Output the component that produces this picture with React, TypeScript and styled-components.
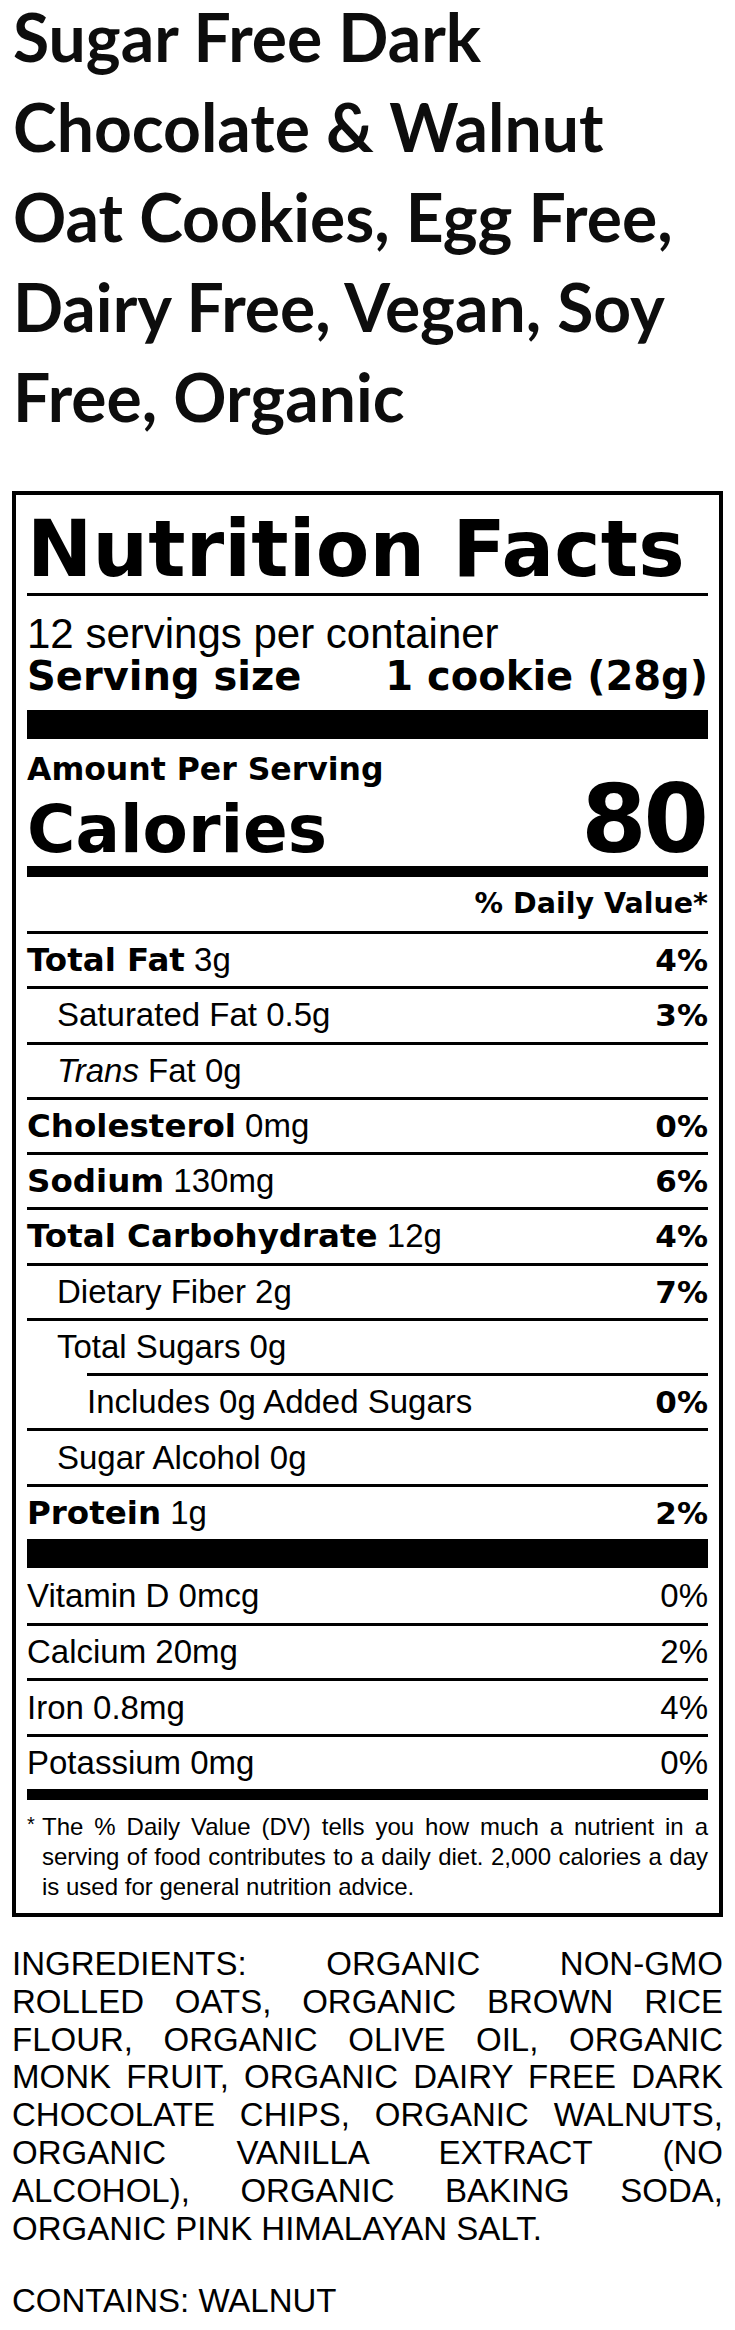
import React from 'react';
import styled, { createGlobalStyle } from 'styled-components';

const GlobalStyle = createGlobalStyle`
  body {
    margin: 0;
    background: #ffffff;
    color: #000000;
  }
`;

const Page = styled.div`
  width: 735px;
  padding: 0 12px;
  box-sizing: border-box;
`;

const Title = styled.h1`
  margin: -8px 0 49px;
  padding-left: 1px;
  font-family: 'Lato', sans-serif;
  font-weight: 700;
  font-size: 66px;
  line-height: 90px;
  color: #0d0d0d;
`;

const TitleLine = styled.span`
  display: block;
  white-space: nowrap;
`;

const Label = styled.section`
  border: 4px solid #000;
  padding: 0 11px;
`;

const LabelTitle = styled.h2`
  margin: 0;
  padding: 15px 0 5px;
  border-bottom: 3px solid #000;
  font-family: 'DejaVu Sans', sans-serif;
  font-weight: 700;
  font-size: 78px;
  line-height: 78px;
  letter-spacing: 0.2px;
  white-space: nowrap;
`;

const Servings = styled.div`
  padding: 17px 0 13px;
  border-bottom: 29px solid #000;
`;

const ServingsCount = styled.div`
  font-family: 'Liberation Sans', Arial, sans-serif;
  font-size: 42px;
  line-height: 42px;
`;

const ServingSize = styled.div`
  display: flex;
  justify-content: space-between;
  font-family: 'DejaVu Sans', sans-serif;
  font-weight: 700;
  font-size: 40px;
  line-height: 42px;
`;

const Amount = styled.div`
  padding: 14px 0 3px;
  border-bottom: 11px solid #000;
`;

const AmountLabel = styled.div`
  font-family: 'DejaVu Sans', sans-serif;
  font-weight: 700;
  font-size: 31.5px;
  line-height: 32px;
`;

const CaloriesRow = styled.div`
  display: flex;
  justify-content: space-between;
  align-items: baseline;
  font-family: 'DejaVu Sans', sans-serif;
  font-weight: 700;
`;

const CaloriesLabel = styled.span`
  font-size: 66px;
  line-height: 66px;
`;

const CaloriesValue = styled.span`
  font-size: 94px;
  line-height: 70px;
  letter-spacing: -3px;
  margin-right: 2px;
`;

const DailyHeader = styled.div`
  padding: 12px 0;
  text-align: right;
  font-family: 'DejaVu Sans', sans-serif;
  font-weight: 700;
  font-size: 28.5px;
  line-height: 30px;
`;

const Row = styled.div<{ $indent?: number; $rule?: boolean }>`
  display: flex;
  align-items: center;
  justify-content: space-between;
  box-sizing: border-box;
  height: 55.27px;
  border-top: ${(p) => (p.$rule === false ? '0' : '3px solid #000')};
  margin-left: ${(p) => (p.$indent === 2 ? '60px' : '0')};
  padding-left: ${(p) => (p.$indent === 1 ? '30px' : '0')};
  white-space: nowrap;
`;

const Name = styled.span<{ $bold?: boolean }>`
  font-family: ${(p) => (p.$bold ? "'DejaVu Sans', sans-serif" : "'Liberation Sans', Arial, sans-serif")};
  font-weight: ${(p) => (p.$bold ? 700 : 400)};
  font-size: ${(p) => (p.$bold ? '32.5px' : '33px')};
`;

const Qty = styled.span`
  font-family: 'Liberation Sans', Arial, sans-serif;
  font-size: 33px;
`;

const Percent = styled.span<{ $bold?: boolean }>`
  font-family: ${(p) => (p.$bold ? "'DejaVu Sans', sans-serif" : "'Liberation Sans', Arial, sans-serif")};
  font-weight: ${(p) => (p.$bold ? 700 : 400)};
  font-size: ${(p) => (p.$bold ? '31px' : '33px')};
`;

const Vitamins = styled.div`
  border-top: 29px solid #000;
  border-bottom: 11px solid #000;
`;

const Footnote = styled.div`
  display: grid;
  grid-template-columns: 15px 1fr;
  padding: 12px 0 11px;
  font-family: 'Liberation Sans', Arial, sans-serif;
  font-size: 24px;
  line-height: 30px;
`;

const Star = styled.span`
  font-size: 20px;
  line-height: 24px;
`;

const JustLine = styled.span<{ $last?: boolean }>`
  display: block;
  text-align: justify;
  text-align-last: ${(p) => (p.$last ? 'left' : 'justify')};
  white-space: nowrap;
`;

const Ingredients = styled.div`
  margin-top: 28px;
  font-family: 'Liberation Sans', Arial, sans-serif;
  font-size: 33px;
  line-height: 37.8px;
`;

const Contains = styled.div`
  margin-top: 35px;
  font-family: 'Liberation Sans', Arial, sans-serif;
  font-size: 33px;
  line-height: 37.8px;
`;

type Nutrient = {
  name: React.ReactNode;
  amount: string;
  dv?: string;
  bold?: boolean;
  indent?: number;
};

const nutrients: Nutrient[] = [
  { name: 'Total Fat', amount: '3g', dv: '4%', bold: true },
  { name: 'Saturated Fat', amount: '0.5g', dv: '3%', indent: 1 },
  { name: <><i>Trans</i> Fat</>, amount: '0g', indent: 1 },
  { name: 'Cholesterol', amount: '0mg', dv: '0%', bold: true },
  { name: 'Sodium', amount: '130mg', dv: '6%', bold: true },
  { name: 'Total Carbohydrate', amount: '12g', dv: '4%', bold: true },
  { name: 'Dietary Fiber', amount: '2g', dv: '7%', indent: 1 },
  { name: 'Total Sugars', amount: '0g', indent: 1 },
  { name: 'Includes 0g Added Sugars', amount: '', dv: '0%', indent: 2 },
  { name: 'Sugar Alcohol', amount: '0g', indent: 1 },
  { name: 'Protein', amount: '1g', dv: '2%', bold: true },
];

const vitamins = [
  { name: 'Vitamin D 0mcg', dv: '0%' },
  { name: 'Calcium 20mg', dv: '2%' },
  { name: 'Iron 0.8mg', dv: '4%' },
  { name: 'Potassium 0mg', dv: '0%' },
];

const titleLines = [
  'Sugar Free Dark',
  'Chocolate & Walnut',
  'Oat Cookies, Egg Free,',
  'Dairy Free, Vegan, Soy',
  'Free, Organic',
];

const footnoteLines = [
  'The % Daily Value (DV) tells you how much a nutrient in a',
  'serving of food contributes to a daily diet. 2,000 calories a day',
  'is used for general nutrition advice.',
];

const ingredientLines = [
  'INGREDIENTS: ORGANIC NON-GMO',
  'ROLLED OATS, ORGANIC BROWN RICE',
  'FLOUR, ORGANIC OLIVE OIL, ORGANIC',
  'MONK FRUIT, ORGANIC DAIRY FREE DARK',
  'CHOCOLATE CHIPS, ORGANIC WALNUTS,',
  'ORGANIC VANILLA EXTRACT (NO',
  'ALCOHOL), ORGANIC BAKING SODA,',
  'ORGANIC PINK HIMALAYAN SALT.',
];

const App = () => {
  return (
    <Page>
      <GlobalStyle />
      <Title>
        {titleLines.map((line) => (
          <TitleLine key={line}>{line}</TitleLine>
        ))}
      </Title>

      <Label>
        <LabelTitle>Nutrition Facts</LabelTitle>

        <Servings>
          <ServingsCount>12 servings per container</ServingsCount>
          <ServingSize>
            <span>Serving size</span>
            <span>1 cookie (28g)</span>
          </ServingSize>
        </Servings>

        <Amount>
          <AmountLabel>Amount Per Serving</AmountLabel>
          <CaloriesRow>
            <CaloriesLabel>Calories</CaloriesLabel>
            <CaloriesValue>80</CaloriesValue>
          </CaloriesRow>
        </Amount>

        <DailyHeader>% Daily Value*</DailyHeader>

        {nutrients.map((n, i) => (
          <Row key={i} $indent={n.indent}>
            <span>
              <Name $bold={n.bold}>{n.name}</Name>
              {n.amount && <Qty> {n.amount}</Qty>}
            </span>
            {n.dv && <Percent $bold>{n.dv}</Percent>}
          </Row>
        ))}

        <Vitamins>
          {vitamins.map((v, i) => (
            <Row key={v.name} $rule={i > 0}>
              <Name>{v.name}</Name>
              <Percent>{v.dv}</Percent>
            </Row>
          ))}
        </Vitamins>

        <Footnote>
          <Star>*</Star>
          <div>
            {footnoteLines.map((line, i) => (
              <JustLine key={line} $last={i === footnoteLines.length - 1}>
                {line}
              </JustLine>
            ))}
          </div>
        </Footnote>
      </Label>

      <Ingredients>
        {ingredientLines.map((line, i) => (
          <JustLine key={line} $last={i === ingredientLines.length - 1}>
            {line}
          </JustLine>
        ))}
      </Ingredients>

      <Contains>CONTAINS: WALNUT</Contains>
    </Page>
  );
};

export default App;
